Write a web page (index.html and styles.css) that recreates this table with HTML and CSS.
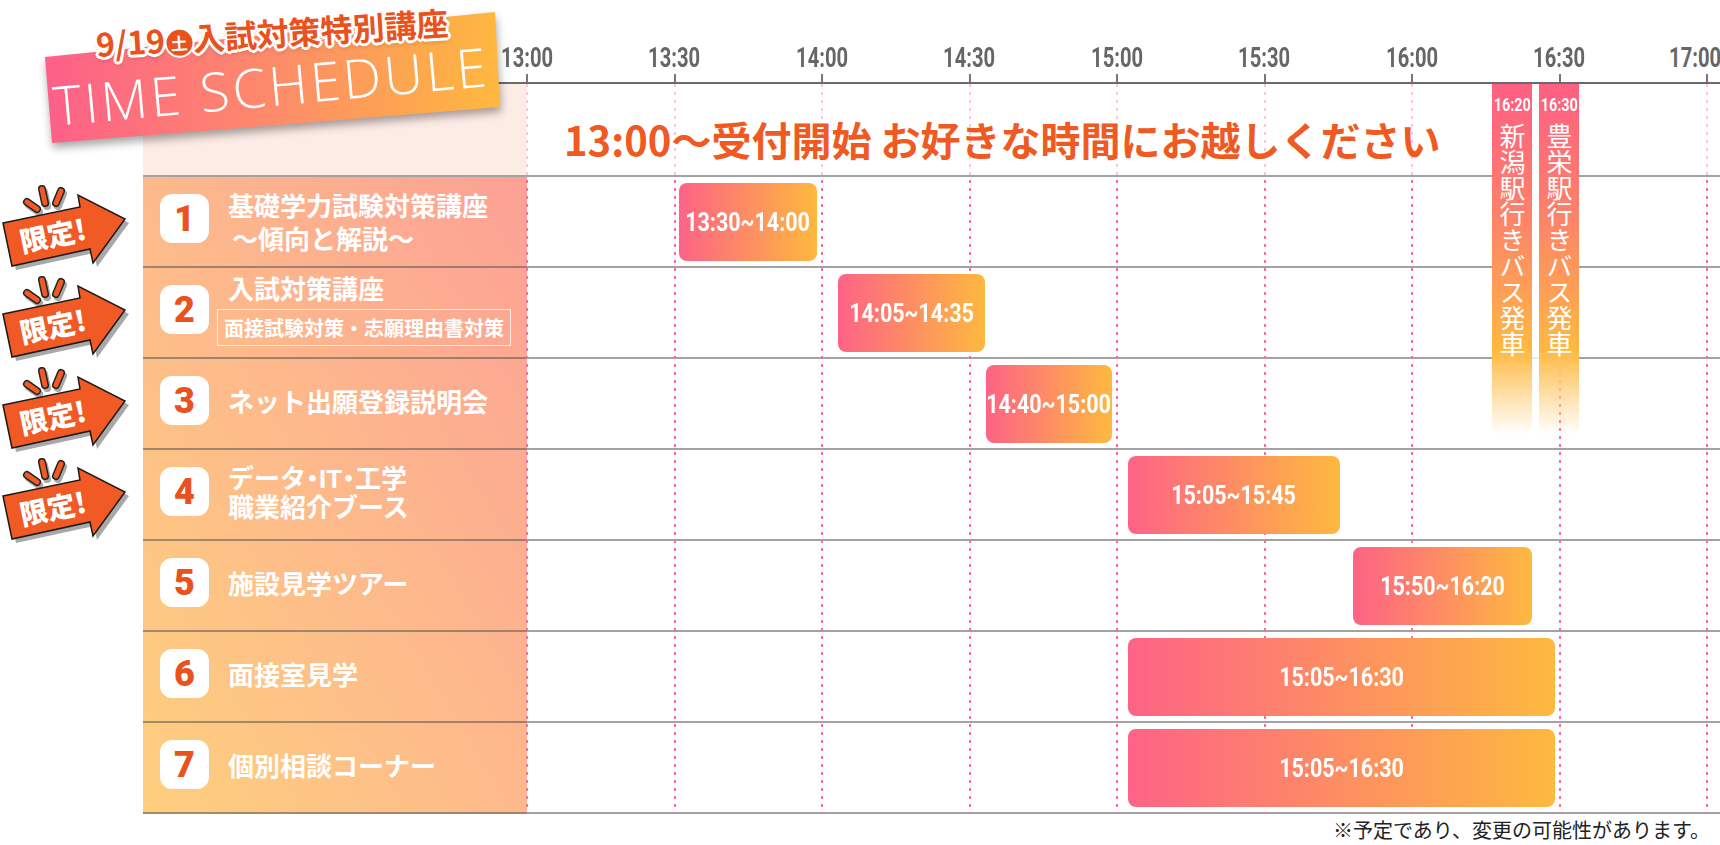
FILE: index.html
```html
<!DOCTYPE html>
<html lang="ja">
<head>
<meta charset="utf-8">
<title>TIME SCHEDULE</title>
<link rel="stylesheet" href="styles.css">
</head>
<body>
<div class="sheet">
  <header class="axis">
    <div class="tick"><span class="tick-label">13:00</span><i class="tick-mark"></i></div>
    <div class="tick"><span class="tick-label">13:30</span><i class="tick-mark"></i></div>
    <div class="tick"><span class="tick-label">14:00</span><i class="tick-mark"></i></div>
    <div class="tick"><span class="tick-label">14:30</span><i class="tick-mark"></i></div>
    <div class="tick"><span class="tick-label">15:00</span><i class="tick-mark"></i></div>
    <div class="tick"><span class="tick-label">15:30</span><i class="tick-mark"></i></div>
    <div class="tick"><span class="tick-label">16:00</span><i class="tick-mark"></i></div>
    <div class="tick"><span class="tick-label">16:30</span><i class="tick-mark"></i></div>
    <div class="tick end"><span class="tick-label">17:00</span><i class="tick-mark"></i></div>
  </header>

  <div class="vlines" aria-hidden="true"><i></i><i></i><i></i><i></i><i></i><i></i><i></i><i></i><i></i></div>

  <div class="table">
    <div class="row row-head">
      <div class="gutter"></div>
      <div class="cells">
        <div class="label label-head"></div>
        <div class="chart chart-head"><p class="reception">13:00～受付開始 お好きな時間にお越しください</p></div>
      </div>
    </div>

    <div class="rows">
      <div class="row">
        <div class="gutter">
          <svg class="limited" width="140" height="100" viewBox="0 0 140 100">
            <path class="burst-shadow" d="M27 25 L37 32 M42 12 L45 26 M61 14 L56 26"/>
            <path class="burst-line" d="M27 25 L37 32 M42 12 L45 26 M61 14 L56 26"/>
            <path class="burst-fill" d="M27 25 L37 32 M42 12 L45 26 M61 14 L56 26"/>
            <polygon class="arrow-shadow" points="3,46 80,30 78,18 125,42 93,86 90,72 12,89"/>
            <polygon class="arrow" points="3,46 80,30 78,18 125,42 93,86 90,72 12,89"/>
            <text x="53" y="69" transform="rotate(-11.7 53 59)">限定!</text>
          </svg>
        </div>
        <div class="cells">
          <div class="label">
            <span class="num">1</span>
            <div class="title two"><span>基礎学力試験対策講座</span><span class="indent">～傾向と解説～</span></div>
          </div>
          <div class="chart"><div class="bar" style="left:152px;width:138px"><span class="bar-time">13:30~14:00</span></div></div>
        </div>
      </div>

      <div class="row">
        <div class="gutter">
          <svg class="limited" width="140" height="100" viewBox="0 0 140 100">
            <path class="burst-shadow" d="M27 25 L37 32 M42 12 L45 26 M61 14 L56 26"/>
            <path class="burst-line" d="M27 25 L37 32 M42 12 L45 26 M61 14 L56 26"/>
            <path class="burst-fill" d="M27 25 L37 32 M42 12 L45 26 M61 14 L56 26"/>
            <polygon class="arrow-shadow" points="3,46 80,30 78,18 125,42 93,86 90,72 12,89"/>
            <polygon class="arrow" points="3,46 80,30 78,18 125,42 93,86 90,72 12,89"/>
            <text x="53" y="69" transform="rotate(-11.7 53 59)">限定!</text>
          </svg>
        </div>
        <div class="cells">
          <div class="label">
            <span class="num">2</span>
            <div class="title sub"><span class="sub-main">入試対策講座</span><span class="sub-box">面接試験対策・志願理由書対策</span></div>
          </div>
          <div class="chart"><div class="bar" style="left:311px;width:147px"><span class="bar-time">14:05~14:35</span></div></div>
        </div>
      </div>

      <div class="row">
        <div class="gutter">
          <svg class="limited" width="140" height="100" viewBox="0 0 140 100">
            <path class="burst-shadow" d="M27 25 L37 32 M42 12 L45 26 M61 14 L56 26"/>
            <path class="burst-line" d="M27 25 L37 32 M42 12 L45 26 M61 14 L56 26"/>
            <path class="burst-fill" d="M27 25 L37 32 M42 12 L45 26 M61 14 L56 26"/>
            <polygon class="arrow-shadow" points="3,46 80,30 78,18 125,42 93,86 90,72 12,89"/>
            <polygon class="arrow" points="3,46 80,30 78,18 125,42 93,86 90,72 12,89"/>
            <text x="53" y="69" transform="rotate(-11.7 53 59)">限定!</text>
          </svg>
        </div>
        <div class="cells">
          <div class="label">
            <span class="num">3</span>
            <div class="title"><span>ネット出願登録説明会</span></div>
          </div>
          <div class="chart"><div class="bar" style="left:459px;width:126px"><span class="bar-time">14:40~15:00</span></div></div>
        </div>
      </div>

      <div class="row">
        <div class="gutter">
          <svg class="limited" width="140" height="100" viewBox="0 0 140 100">
            <path class="burst-shadow" d="M27 25 L37 32 M42 12 L45 26 M61 14 L56 26"/>
            <path class="burst-line" d="M27 25 L37 32 M42 12 L45 26 M61 14 L56 26"/>
            <path class="burst-fill" d="M27 25 L37 32 M42 12 L45 26 M61 14 L56 26"/>
            <polygon class="arrow-shadow" points="3,46 80,30 78,18 125,42 93,86 90,72 12,89"/>
            <polygon class="arrow" points="3,46 80,30 78,18 125,42 93,86 90,72 12,89"/>
            <text x="53" y="69" transform="rotate(-11.7 53 59)">限定!</text>
          </svg>
        </div>
        <div class="cells">
          <div class="label">
            <span class="num">4</span>
            <div class="title tight"><span class="halt">データ・IT・工学</span><span>職業紹介ブース</span></div>
          </div>
          <div class="chart"><div class="bar" style="left:601px;width:212px"><span class="bar-time">15:05~15:45</span></div></div>
        </div>
      </div>

      <div class="row">
        <div class="gutter"></div>
        <div class="cells">
          <div class="label">
            <span class="num">5</span>
            <div class="title"><span>施設見学ツアー</span></div>
          </div>
          <div class="chart"><div class="bar" style="left:826px;width:179px"><span class="bar-time">15:50~16:20</span></div></div>
        </div>
      </div>

      <div class="row">
        <div class="gutter"></div>
        <div class="cells">
          <div class="label">
            <span class="num">6</span>
            <div class="title"><span>面接室見学</span></div>
          </div>
          <div class="chart"><div class="bar" style="left:601px;width:427px"><span class="bar-time">15:05~16:30</span></div></div>
        </div>
      </div>

      <div class="row">
        <div class="gutter"></div>
        <div class="cells">
          <div class="label">
            <span class="num">7</span>
            <div class="title"><span>個別相談コーナー</span></div>
          </div>
          <div class="chart"><div class="bar" style="left:601px;width:427px"><span class="bar-time">15:05~16:30</span></div></div>
        </div>
      </div>
    </div>
  </div>

  <div class="buses">
    <div class="bus"><span class="bus-time">16:20</span><span class="bus-text">新潟駅行きバス発車</span></div>
    <div class="bus"><span class="bus-time">16:30</span><span class="bus-text">豊栄駅行きバス発車</span></div>
  </div>

  <div class="ribbon">
    <svg class="ribbon-band" width="520" height="160" viewBox="0 0 520 160">
      <defs>
        <linearGradient id="ribbonGrad" x1="0" y1="0" x2="1" y2="0">
          <stop offset="0" stop-color="#fd5f88"/>
          <stop offset="0.5" stop-color="#fd8b6a"/>
          <stop offset="1" stop-color="#feb83e"/>
        </linearGradient>
      </defs>
      <path d="M45 57 L495 12 L500 107 L52 143 Z" fill="url(#ribbonGrad)"/>
    </svg>
    <p class="ribbon-title">9/19<span class="dow">土</span>入試対策特別講座</p>
    <p class="ribbon-en">TIME SCHEDULE</p>
  </div>

  <p class="note">※予定であり、変更の可能性があります。</p>
</div>
</body>
</html>
```

FILE: styles.css
```css
* { box-sizing: border-box; margin: 0; padding: 0; }

html, body {
  width: 1720px;
  height: 845px;
  overflow: hidden;
  background: #fff;
}

body {
  font-family: "Noto Sans CJK JP", "Noto Sans", sans-serif;
  color: #222;
}

.sheet {
  position: relative;
  width: 1720px;
  height: 845px;
}

/* ---------- time axis ---------- */
.axis {
  display: flex;
  align-items: flex-end;
  height: 84px;
  margin-left: 143px;
  padding-left: 310.25px;
  border-bottom: 2px solid #6a6a6a;
}

.tick {
  flex: 0 0 147.5px;
  display: flex;
  flex-direction: column;
  align-items: center;
}

.tick-label {
  display: block;
  font-family: Roboto, "Noto Sans", sans-serif;
  font-weight: 700;
  font-size: 28px;
  line-height: 27px;
  color: #666;
  transform: scaleX(0.72);
  white-space: nowrap;
}

.tick.end .tick-label {
  transform: translateX(-12px) scaleX(0.72);
}

.tick-mark {
  display: block;
  width: 2px;
  height: 8px;
  margin-top: 3px;
  background: #777;
}

/* ---------- dotted half-hour lines ---------- */
.vlines {
  position: absolute;
  left: 526px;
  top: 84px;
  width: 1182px;
  height: 730px;
  display: flex;
  justify-content: space-between;
  pointer-events: none;
}

.vlines i {
  display: block;
  width: 2px;
  height: 100%;
  background:
    linear-gradient(rgba(255, 255, 255, 0.6) 0 91px, transparent 91px),
    repeating-linear-gradient(#f36fa3 0 3px, transparent 3px 8px);
}

/* ---------- table ---------- */
.row {
  display: flex;
  height: 91px;
}

.row-head {
  height: 93px;
}

.gutter {
  flex: 0 0 143px;
}

.cells {
  flex: 1;
  display: flex;
  border-bottom: 2px solid rgba(85, 85, 85, 0.55);
}

.label {
  flex: 0 0 384px;
  display: flex;
  align-items: center;
  padding-left: 17px;
  padding-bottom: 6px;
}

.label-head {
  background: #fdebe6;
}

.chart {
  flex: 1;
  position: relative;
}

.rows {
  background: linear-gradient(to top right, #fecf7e 0%, #fdb98b 50%, #fca195 100%) 143px 0 / 384px 100% no-repeat;
}

.chart-head {
  padding: 35px 0 0 37px;
}

.reception {
  font-size: 40px;
  line-height: 40px;
  font-weight: 700;
  color: #ef5a23;
  white-space: nowrap;
}

/* number badge */
.num {
  flex: 0 0 49px;
  height: 49px;
  margin-right: 19px;
  border-radius: 12px;
  background: #fff;
  display: flex;
  align-items: center;
  justify-content: center;
  font-family: Roboto, "Noto Sans", sans-serif;
  font-weight: 900;
  font-size: 36px;
  line-height: 1;
  color: #e9521d;
}

.title {
  color: #fff;
  font-weight: 700;
  font-size: 26px;
  line-height: 30px;
  white-space: nowrap;
}

.title > span {
  display: block;
}

.title .halt {
  font-feature-settings: "halt" 1;
}

.title.two,
.title.tight {
  font-family: "Liberation Sans", "Noto Sans CJK JP", sans-serif;
}

.title.two {
  line-height: 33px;
  margin-top: 10px;
}

.title .indent {
  padding-left: 4px;
}

.title.tight {
  line-height: 29px;
  margin-top: 4px;
}

.title.sub {
  margin-left: -11px;
}

.title .sub-main {
  padding-left: 11px;
}

.title .sub-box {
  margin-top: 6px;
  padding: 0 6px;
  border: 1px solid rgba(255, 255, 255, 0.75);
  font-size: 20px;
  line-height: 35px;
}

/* time bars */
.bar {
  position: absolute;
  top: 6px;
  height: 78px;
  border-radius: 8px;
  background: linear-gradient(90deg, #fd6386, #fdb93f);
  display: flex;
  align-items: center;
  justify-content: center;
}

.bar-time {
  display: block;
  font-family: Roboto, "Noto Sans", sans-serif;
  font-weight: 700;
  font-size: 25px;
  line-height: 25px;
  color: #fff;
  transform: scaleX(0.86);
  white-space: nowrap;
}

/* 限定! arrows */
.limited {
  display: block;
  overflow: visible;
}

.limited .burst-shadow {
  fill: none;
  stroke: #a8a8a8;
  stroke-width: 8;
  stroke-linecap: round;
  transform: translate(2px, 3px);
}

.limited .burst-line {
  fill: none;
  stroke: #222;
  stroke-width: 8;
  stroke-linecap: round;
}

.limited .burst-fill {
  fill: none;
  stroke: #f15a24;
  stroke-width: 5;
  stroke-linecap: round;
}

.limited .arrow-shadow {
  fill: #a8a8a8;
  transform: translate(4px, 4px);
}

.limited .arrow {
  fill: #f15a24;
  stroke: #1a1a1a;
  stroke-width: 1.5;
}

.limited text {
  fill: #fff;
  font-family: "Noto Sans CJK JP", sans-serif;
  font-weight: 900;
  font-size: 28px;
  text-anchor: middle;
}

/* bus departures */
.buses {
  position: absolute;
  left: 1492px;
  top: 84px;
  width: 87px;
  height: 350px;
  display: flex;
  justify-content: space-between;
  background: linear-gradient(#fff 0 72%, rgba(255, 255, 255, 0) 100%);
}

.bus {
  width: 40px;
  display: flex;
  flex-direction: column;
  align-items: center;
  padding-top: 12px;
  color: #fff;
  background: linear-gradient(#fe5e82 0%, #fd7f6c 35%, #fea055 60%, #feb940 76%, rgba(254, 205, 110, 0) 100%);
}

.bus-time {
  display: block;
  font-family: Roboto, "Noto Sans", sans-serif;
  font-weight: 700;
  font-size: 18px;
  line-height: 18px;
  transform: scaleX(0.8);
}

.bus-text {
  display: block;
  margin-top: 9px;
  writing-mode: vertical-rl;
  font-size: 26px;
  line-height: 30px;
  font-weight: 400;
}

/* title ribbon */
.ribbon {
  position: absolute;
  left: 0;
  top: 0;
  width: 540px;
  height: 160px;
  pointer-events: none;
}

.ribbon-band {
  display: block;
  filter: drop-shadow(1px 5px 4px rgba(0, 0, 0, 0.35));
}

.ribbon-title {
  position: absolute;
  left: 0;
  top: 12px;
  width: 544px;
  text-align: center;
  font-size: 32px;
  line-height: 40px;
  font-weight: 700;
  color: #e9521d;
  white-space: nowrap;
  transform: rotate(-3.6deg);
  text-shadow:
    3px 0 #fff, -3px 0 #fff, 0 3px #fff, 0 -3px #fff,
    2px 2px #fff, -2px 2px #fff, 2px -2px #fff, -2px -2px #fff,
    0 3px 5px rgba(0, 0, 0, 0.25);
}

.dow {
  display: inline-block;
  width: 26px;
  height: 26px;
  margin: 0 1px;
  border-radius: 50%;
  background: #e9521d;
  color: #fff;
  font-size: 17px;
  line-height: 26px;
  text-align: center;
  vertical-align: 2px;
  text-shadow: none;
  box-shadow: 0 0 0 2px #fff;
}

.ribbon-en {
  position: absolute;
  left: 0;
  top: 58px;
  width: 542px;
  text-align: center;
  font-family: "Open Sans", "Noto Sans", sans-serif;
  font-weight: 300;
  font-size: 54px;
  line-height: 54px;
  letter-spacing: 3px;
  color: #fff;
  white-space: nowrap;
  transform: rotate(-5.2deg);
}

/* footnote */
.note {
  margin-top: 6px;
  padding-right: 10px;
  text-align: right;
  font-size: 20px;
  line-height: 20px;
  color: #222;
}
```
